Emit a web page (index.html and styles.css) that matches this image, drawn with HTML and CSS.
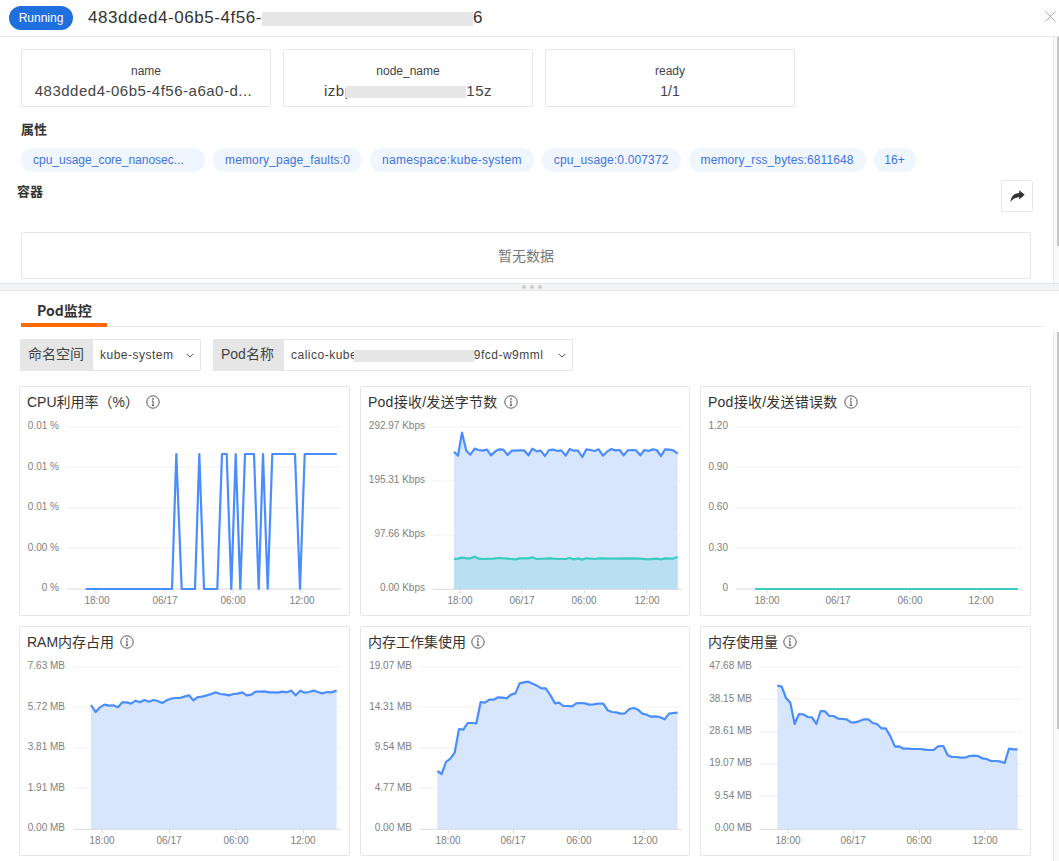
FILE: index.html
```html
<!DOCTYPE html>
<html lang="zh">
<head>
<meta charset="utf-8">
<title>Pod</title>
<link rel="stylesheet" href="styles.css">
</head>
<body>
<header class="top">
  <span class="badge">Running</span>
  <h1 class="pod-title">483dded4-06b5-4f56-<span class="mask mask-title"></span>6</h1>
  <svg class="close" viewBox="0 0 12 12"><path d="M.5.5l11 11M11.5.5l-11 11"/></svg>
</header>
<section class="upper">
  <div class="stats">
    <div class="stat"><div class="stat-k">name</div><div class="stat-v stat-wide stat-name">483dded4-06b5-4f56-a6a0-d...</div></div>
    <div class="stat"><div class="stat-k">node_name</div><div class="stat-v stat-wide">izbp<span class="mask mask-node"></span>u15z</div></div>
    <div class="stat"><div class="stat-k">ready</div><div class="stat-v">1/1</div></div>
  </div>
  <h2 class="label">属性</h2>
  <div class="tags">
    <span class="tag tag-long">cpu_usage_core_nanosec...</span>
    <span class="tag tag-a">memory_page_faults:0</span>
    <span class="tag tag-b">namespace:kube-system</span>
    <span class="tag tag-a">cpu_usage:0.007372</span>
    <span class="tag tag-c">memory_rss_bytes:6811648</span>
    <span class="tag tag-more">16+</span>
  </div>
  <div class="container-head">
    <h2 class="label label-c">容器</h2>
    <button class="share"><svg viewBox="0 0 1024 1024" width="15" height="15"><path d="M1004 400 628 90v190C300 290 80 480 30 900c110-210 300-330 598-330v140z"/></svg></button>
  </div>
  <div class="empty">暂无数据</div>
  <div class="sb sb-top"></div>
</section>
<div class="split"><i></i><i></i><i></i></div>
<section class="lower">
  <div class="tabs"><span class="tab">Pod监控</span></div>
  <div class="filters">
    <div class="filter"><span class="f-label f-ns">命名空间</span><span class="f-sel f-sel-ns">kube-system<svg class="chev" viewBox="0 0 10 6"><path d="M1 1l4 4 4-4"/></svg></span></div>
    <div class="filter"><span class="f-label f-pod">Pod名称</span><span class="f-sel f-sel-pod">calico-kube<span class="mask mask-sel"></span>9fcd-w9mml<svg class="chev" viewBox="0 0 10 6"><path d="M1 1l4 4 4-4"/></svg></span></div>
  </div>
  <div class="grid">
    <article class="card">
      <div class="card-t">CPU利用率（%）<svg class="info info-l" viewBox="0 0 14 14"><circle cx="7" cy="7" r="6.2"/><path d="M7 6v4.2M5.8 10.4h2.4M6 6h1"/><circle class="dot" cx="7" cy="3.9" r=".8"/></svg></div>
      <svg class="plot" viewBox="20 416 329 199">
        <g class="grid-l"><path d="M67 427H341M67 467H341M67 508H341M67 548H341"/></g>
        <path class="axis" d="M67 589H341M96 589v4M165 589v4M233 589v4M302 589v4"/>
        <path class="line" d="M85.7 589H172L176.3 454 181.7 589H195L199.3 454 204 589H217.3L222 454H226.7L231.3 589 235.7 454 240.3 589 245 454H254L258.7 589 263 454 267.7 589 272.3 454H295L300 589 304.7 454H336.7"/>
        <g class="yt"><text x="59" y="429">0.01 %</text><text x="59" y="470">0.01 %</text><text x="59" y="510">0.01 %</text><text x="59" y="551">0.00 %</text><text x="59" y="591">0 %</text></g>
        <g class="xt"><text x="97" y="604">18:00</text><text x="165" y="604">06/17</text><text x="233" y="604">06:00</text><text x="302" y="604">12:00</text></g>
      </svg>
    </article>
    <article class="card">
      <div class="card-t card-pod">Pod接收/发送字节数<svg class="info info-m" viewBox="0 0 14 14"><circle cx="7" cy="7" r="6.2"/><path d="M7 6v4.2M5.8 10.4h2.4M6 6h1"/><circle class="dot" cx="7" cy="3.9" r=".8"/></svg></div>
      <svg class="plot" viewBox="361 416 329 199">
        <g class="grid-l"><path d="M433 427H682M433 481H682M433 535H682"/></g>
        <g transform="translate(350 330) scale(.33333)">
          <path class="area" d="M312 365L324 377 336 308 349 362 361 374 374 356 386 360 398 362 411 359 423 376 436 364 448 358 460 359 473 375 485 362 497 362 510 361 522 361 535 376 547 356 560 364 572 362 585 378 597 360 610 359 622 363 634 361 647 377 659 357 672 362 684 362 697 381 709 358 722 360 734 363 746 358 759 377 771 365 784 357 796 361 809 360 821 376 833 361 846 360 858 361 871 376 883 360 896 363 908 358 920 360 933 378 945 358 958 359 970 361 983 371V778H312Z"/>
          <path class="area-t" d="M312 687L324 686 336 683 349 685 361 685 374 680 386 686 398 687 430 686 448 684 470 686 496 688 510 685 535 685 547 682 560 687 600 685 625 687 647 687 659 684 672 688 684 685 697 689 709 685 734 687 746 685 790 686 833 685 870 686 896 688 920 686 933 688 945 685 970 686 983 680V778H312Z"/>
          <path class="axis ns" d="M248 778H997M330 778v12M516 778v12M703 778v12M890 778v12"/>
          <path class="line ns" d="M312 365L324 377 336 308 349 362 361 374 374 356 386 360 398 362 411 359 423 376 436 364 448 358 460 359 473 375 485 362 497 362 510 361 522 361 535 376 547 356 560 364 572 362 585 378 597 360 610 359 622 363 634 361 647 377 659 357 672 362 684 362 697 381 709 358 722 360 734 363 746 358 759 377 771 365 784 357 796 361 809 360 821 376 833 361 846 360 858 361 871 376 883 360 896 363 908 358 920 360 933 378 945 358 958 359 970 361 983 371"/>
          <path class="line-t ns" d="M312 687L324 686 336 683 349 685 361 685 374 680 386 686 398 687 430 686 448 684 470 686 496 688 510 685 535 685 547 682 560 687 600 685 625 687 647 687 659 684 672 688 684 685 697 689 709 685 734 687 746 685 790 686 833 685 870 686 896 688 920 686 933 688 945 685 970 686 983 680"/>
        </g>
        <g class="yt"><text x="425" y="429">292.97 Kbps</text><text x="425" y="483">195.31 Kbps</text><text x="425" y="537">97.66 Kbps</text><text x="425" y="591">0.00 Kbps</text></g>
        <g class="xt"><text x="460" y="604">18:00</text><text x="522" y="604">06/17</text><text x="584" y="604">06:00</text><text x="647" y="604">12:00</text></g>
      </svg>
    </article>
    <article class="card">
      <div class="card-t card-pod">Pod接收/发送错误数<svg class="info info-m" viewBox="0 0 14 14"><circle cx="7" cy="7" r="6.2"/><path d="M7 6v4.2M5.8 10.4h2.4M6 6h1"/><circle class="dot" cx="7" cy="3.9" r=".8"/></svg></div>
      <svg class="plot" viewBox="701 416 329 199">
        <g class="grid-l"><path d="M736 427H1022M736 467H1022M736 508H1022M736 548H1022"/></g>
        <path class="axis" d="M736 589H1022M767 589v4M838 589v4M910 589v4M981 589v4"/>
        <path class="line-t" d="M755 589H1018"/>
        <g class="yt"><text x="728" y="429">1.20</text><text x="728" y="470">0.90</text><text x="728" y="510">0.60</text><text x="728" y="551">0.30</text><text x="728" y="591">0</text></g>
        <g class="xt"><text x="767" y="604">18:00</text><text x="838" y="604">06/17</text><text x="910" y="604">06:00</text><text x="981" y="604">12:00</text></g>
      </svg>
    </article>
    <article class="card">
      <div class="card-t">RAM内存占用<svg class="info info-m" viewBox="0 0 14 14"><circle cx="7" cy="7" r="6.2"/><path d="M7 6v4.2M5.8 10.4h2.4M6 6h1"/><circle class="dot" cx="7" cy="3.9" r=".8"/></svg></div>
      <svg class="plot" viewBox="20 656 329 199">
        <g class="grid-l"><path d="M73 667H341M73 707H341M73 748H341M73 788H341"/></g>
        <g transform="translate(0 620) scale(.33333)">
          <path class="area" d="M273 255L287 276 300 262 313 254 327 257 340 256 354 262 367 247 380 247 393 251 407 242 420 247 433 240 447 245 460 240 473 243 487 249 500 241 513 236 527 234 540 234 553 230 567 226 580 241 594 231 607 230 620 226 634 222 647 217 660 222 673 223 687 226 700 222 713 221 727 217 740 226 754 224 767 215 780 215 794 214 807 217 820 217 834 218 847 215 860 217 874 212 887 226 901 212 914 218 927 216 941 212 954 216 967 220 981 216 994 217 1010 212V628H273Z"/>
          <path class="axis ns" d="M220 628H1023M307 628v12M508 628v12M709 628v12M910 628v12"/>
          <path class="line ns" d="M273 255L287 276 300 262 313 254 327 257 340 256 354 262 367 247 380 247 393 251 407 242 420 247 433 240 447 245 460 240 473 243 487 249 500 241 513 236 527 234 540 234 553 230 567 226 580 241 594 231 607 230 620 226 634 222 647 217 660 222 673 223 687 226 700 222 713 221 727 217 740 226 754 224 767 215 780 215 794 214 807 217 820 217 834 218 847 215 860 217 874 212 887 226 901 212 914 218 927 216 941 212 954 216 967 220 981 216 994 217 1010 212"/>
        </g>
        <g class="yt"><text x="65" y="669">7.63 MB</text><text x="65" y="710">5.72 MB</text><text x="65" y="750">3.81 MB</text><text x="65" y="791">1.91 MB</text><text x="65" y="831">0.00 MB</text></g>
        <g class="xt"><text x="102" y="844">18:00</text><text x="169" y="844">06/17</text><text x="236" y="844">06:00</text><text x="303" y="844">12:00</text></g>
      </svg>
    </article>
    <article class="card">
      <div class="card-t">内存工作集使用<svg class="info" viewBox="0 0 14 14"><circle cx="7" cy="7" r="6.2"/><path d="M7 6v4.2M5.8 10.4h2.4M6 6h1"/><circle class="dot" cx="7" cy="3.9" r=".8"/></svg></div>
      <svg class="plot" viewBox="361 656 329 199">
        <g class="grid-l"><path d="M419 667H682M419 707H682M419 748H682M419 788H682"/></g>
        <g transform="translate(355 620) scale(.33333)">
          <path class="area" d="M247 453L260 462 273 426 286 416 299 398 312 327 325 329 338 309 351 309 364 310 377 246 390 248 403 239 416 239 429 232 442 233 455 235 468 224 481 220 494 190 507 187 520 185 533 191 546 197 559 205 572 205 585 224 600 250 612 248 625 258 638 258 651 259 664 250 677 249 690 250 703 254 716 253 729 251 745 251 758 271 771 276 784 277 797 281 810 280 823 267 836 264 849 269 862 281 875 284 888 290 901 289 914 291 929 298 942 281 955 279 968 278V628H247Z"/>
          <path class="axis ns" d="M193 628H982M280 628v12M475 628v12M673 628v12M868 628v12"/>
          <path class="line ns" d="M247 453L260 462 273 426 286 416 299 398 312 327 325 329 338 309 351 309 364 310 377 246 390 248 403 239 416 239 429 232 442 233 455 235 468 224 481 220 494 190 507 187 520 185 533 191 546 197 559 205 572 205 585 224 600 250 612 248 625 258 638 258 651 259 664 250 677 249 690 250 703 254 716 253 729 251 745 251 758 271 771 276 784 277 797 281 810 280 823 267 836 264 849 269 862 281 875 284 888 290 901 289 914 291 929 298 942 281 955 279 968 278"/>
        </g>
        <g class="yt"><text x="412" y="669">19.07 MB</text><text x="412" y="710">14.31 MB</text><text x="412" y="750">9.54 MB</text><text x="412" y="791">4.77 MB</text><text x="412" y="831">0.00 MB</text></g>
        <g class="xt"><text x="448" y="844">18:00</text><text x="513" y="844">06/17</text><text x="579" y="844">06:00</text><text x="645" y="844">12:00</text></g>
      </svg>
    </article>
    <article class="card">
      <div class="card-t">内存使用量<svg class="info" viewBox="0 0 14 14"><circle cx="7" cy="7" r="6.2"/><path d="M7 6v4.2M5.8 10.4h2.4M6 6h1"/><circle class="dot" cx="7" cy="3.9" r=".8"/></svg></div>
      <svg class="plot" viewBox="701 656 329 199">
        <g class="grid-l"><path d="M759 667H1022M759 699H1022M759 732H1022M759 764H1022M759 796H1022"/></g>
        <g transform="translate(695 620) scale(.33333)">
          <path class="area" d="M247 197L260 200 273 234 286 248 299 312 312 282 325 283 338 291 351 292 364 312 377 273 390 274 403 288 416 288 429 296 442 297 455 298 468 307 481 307 494 303 507 298 520 298 533 309 546 312 559 325 572 325 585 347 600 380 612 379 625 386 638 386 651 387 664 387 677 387 690 389 703 390 716 390 729 379 745 378 758 406 771 411 784 411 797 413 810 413 823 408 836 407 849 408 862 415 875 417 888 423 901 423 914 424 929 429 942 386 955 388 968 388V628H247Z"/>
          <path class="axis ns" d="M193 628H982M280 628v12M475 628v12M673 628v12M868 628v12"/>
          <path class="line ns" d="M247 197L260 200 273 234 286 248 299 312 312 282 325 283 338 291 351 292 364 312 377 273 390 274 403 288 416 288 429 296 442 297 455 298 468 307 481 307 494 303 507 298 520 298 533 309 546 312 559 325 572 325 585 347 600 380 612 379 625 386 638 386 651 387 664 387 677 387 690 389 703 390 716 390 729 379 745 378 758 406 771 411 784 411 797 413 810 413 823 408 836 407 849 408 862 415 875 417 888 423 901 423 914 424 929 429 942 386 955 388 968 388"/>
        </g>
        <g class="yt"><text x="752" y="669">47.68 MB</text><text x="752" y="702">38.15 MB</text><text x="752" y="734">28.61 MB</text><text x="752" y="766">19.07 MB</text><text x="752" y="799">9.54 MB</text><text x="752" y="831">0.00 MB</text></g>
        <g class="xt"><text x="788" y="844">18:00</text><text x="853" y="844">06/17</text><text x="919" y="844">06:00</text><text x="985" y="844">12:00</text></g>
      </svg>
    </article>
  </div>
  <div class="sb sb-low"></div>
</section>
</body>
</html>
```
FILE: styles.css
```css
*{box-sizing:border-box}
html,body{margin:0;padding:0;height:100%;overflow:hidden}
body{width:1059px;height:861px;background:#fff;color:#333;font-family:"Noto Sans CJK SC","Noto Sans",sans-serif;font-size:12px}
.top{height:37px;display:flex;align-items:center;padding-left:9px;border-bottom:1px solid #e5e7eb;position:relative}
.badge{width:64px;height:24px;border-radius:12px;background:#1f6fde;color:#fff;font:12px/24px "Liberation Sans",sans-serif;text-align:center}
.pod-title{margin:0 0 0 15px;font:400 17px/24px "Liberation Sans",sans-serif;letter-spacing:.55px;color:#333;white-space:nowrap}
.mask{display:inline-block;background:#e6e6e6;vertical-align:middle;position:relative}
.mask-title{width:211px;height:14px}
.mask-node{width:120px;height:12px;margin:0 -8px 0 -8px}
.mask-sel{width:120px;height:12px;margin-left:-3.5px}
.close{position:absolute;left:1045px;top:11px;width:11px;height:11px;fill:none;stroke:#999;stroke-width:.9}
.upper{height:246px;position:relative;padding:12px 0 0 21px}
.stats{display:flex;gap:12px}
.stat{width:250px;height:58px;border:1px solid #e5e7eb;border-radius:2px;text-align:center;padding-top:12px;font-family:"Liberation Sans",sans-serif}
.stat-k{font-size:12px;line-height:18px;color:#444}
.stat-v{font-size:14px;line-height:22px;color:#444;white-space:nowrap}
.stat-wide{font-size:15px;letter-spacing:.5px}
.stat-name{padding-right:5px}
.label{margin:0;font:700 13px/18px "Noto Sans CJK SC",sans-serif;color:#333}
.stats+.label{margin-top:13px}
.tags{display:flex;gap:8px;margin-top:10px}
.tag{height:24px;line-height:24px;padding:0 12px;border-radius:12px;background:#eff6ff;color:#3f73e0;font-family:"Liberation Sans",sans-serif;font-size:12px;white-space:nowrap}
.tag-long{width:184px}
.tag-a{letter-spacing:.15px}
.tag-b{letter-spacing:.3px}
.tag-c{letter-spacing:.1px}
.tag-more{width:42px;padding:0;text-align:center}
.container-head{display:flex;justify-content:space-between;align-items:flex-start;margin:8px 26px 0 -4px}
.label-c{margin-top:2px}
.share{width:32px;height:32px;padding:0;border:1px solid #e5e7eb;border-radius:2px;background:#fff;display:flex;align-items:center;justify-content:center}
.share svg{fill:#333}
.empty{width:1010px;height:47px;margin-top:20px;border:1px solid #e5e7eb;border-radius:2px;text-align:center;font-size:14px;line-height:45px;color:#777}
.sb{position:absolute;left:1053px;width:6px;background:#fafafa;border-left:1px solid #e8e8e8}
.sb::after{content:"";display:block;width:2px;margin-left:3px;background:#c4c4c4}
.sb-top{top:0;bottom:0}
.sb-top::after{height:209px}
.sb-low{top:41px;height:529px}
.sb-low::after{height:397px}
.split{height:8px;background:#f2f3f5;border-top:1px solid #e5e7eb;border-bottom:1px solid #e5e7eb;display:flex;align-items:center;justify-content:center;gap:4px;padding-left:5px}
.split i{width:4px;height:4px;border-radius:50%;background:#cdcdcd}
.lower{position:relative}
.tabs{height:36px;margin:0 15px 0 21px;border-bottom:1px solid #e5e7eb;position:relative}
.tab{display:block;width:86px;height:36px;padding:9px 0 0 16px;border-bottom:4px solid #ff6a00;font:700 14px/20px "Noto Sans CJK SC",sans-serif;color:#333}
.filters{display:flex;gap:12px;margin:12px 0 0 20px}
.filter{display:flex;height:32px}
.f-label{background:#e6e6e6;color:#444;font-size:14px;line-height:30px;padding-left:8px;font-family:"Liberation Sans","Noto Sans CJK SC",sans-serif}
.f-ns{width:73px}
.f-pod{width:71px}
.f-sel{display:block;line-height:30px;border:1px solid #e6e6e6;border-left:0;padding-left:7px;font:12px/30px "Liberation Sans",sans-serif;letter-spacing:.5px;color:#444;position:relative;white-space:nowrap}
.f-sel-ns{width:108px}
.f-sel-pod{width:289px}
.chev{position:absolute;right:6px;top:13px;width:8px;height:5px;fill:none;stroke:#444;stroke-width:1.2}
.grid{display:grid;grid-template-columns:331px 330px 331px;grid-auto-rows:230px;gap:10px;margin:15px 0 0 19px}
.card{border:1px solid #e5e7eb;border-radius:2px;background:#fff}
.card-t{height:29px;padding:0 0 0 7px;font:14px/18px "Liberation Sans","Noto Sans CJK SC",sans-serif;color:#333;display:flex;align-items:center;white-space:nowrap}
.card-pod{letter-spacing:.25px}
.info{width:14px;height:14px;margin-left:5px;fill:none;stroke:#444;stroke-width:.9}
.info-l{margin-left:7px}
.info-m{margin-left:6px}
.info .dot{fill:#444;stroke:none}
.plot{display:block;width:329px;height:199px}
.grid-l path{fill:none;stroke:#f0f0f0;stroke-width:1}
.axis{fill:none;stroke:#d9d9d9;stroke-width:1}
.ns{vector-effect:non-scaling-stroke}
.line,.line-t{fill:none;stroke-linejoin:round;stroke-width:2.2}
.line{stroke:#4a8dff}
.line-t{stroke:#3ccbc0}
.area{fill:#d7e6fd}
.area-t{fill:#b9dff2}
.plot text{font:10px "Liberation Sans",sans-serif;fill:#808080}
.yt text{text-anchor:end}
.xt text{text-anchor:middle}
```
